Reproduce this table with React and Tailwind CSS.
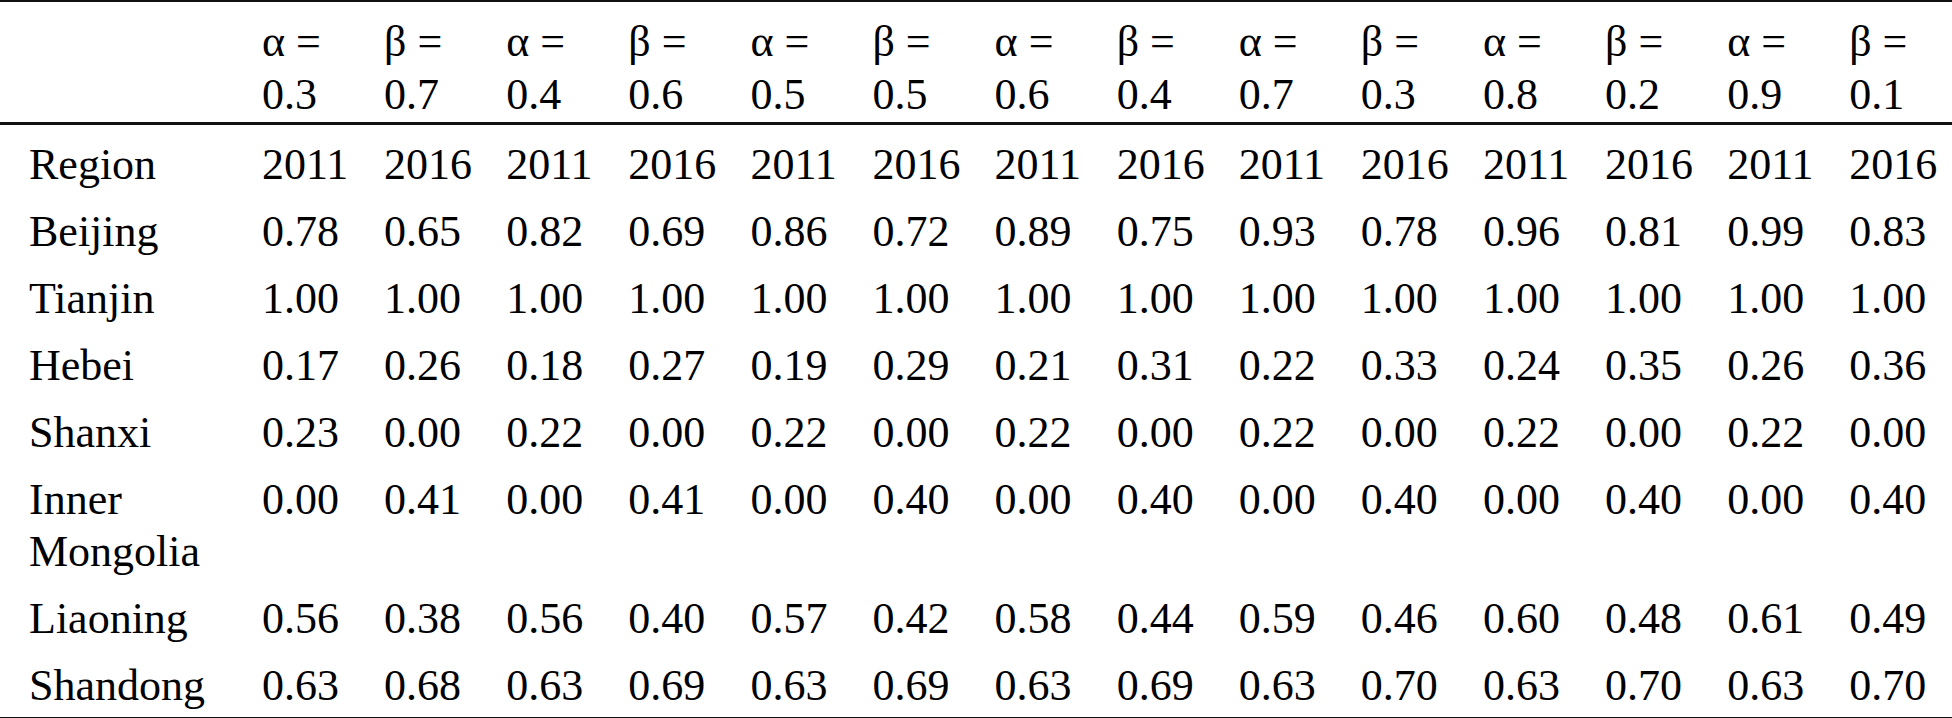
import React from "react";

const params = [
  ["α", "0.3"], ["β", "0.7"], ["α", "0.4"], ["β", "0.6"], ["α", "0.5"], ["β", "0.5"], ["α", "0.6"],
  ["β", "0.4"], ["α", "0.7"], ["β", "0.3"], ["α", "0.8"], ["β", "0.2"], ["α", "0.9"], ["β", "0.1"],
];

const rows = [
  ["Beijing", "0.78 0.65 0.82 0.69 0.86 0.72 0.89 0.75 0.93 0.78 0.96 0.81 0.99 0.83"],
  ["Tianjin", "1.00 1.00 1.00 1.00 1.00 1.00 1.00 1.00 1.00 1.00 1.00 1.00 1.00 1.00"],
  ["Hebei", "0.17 0.26 0.18 0.27 0.19 0.29 0.21 0.31 0.22 0.33 0.24 0.35 0.26 0.36"],
  ["Shanxi", "0.23 0.00 0.22 0.00 0.22 0.00 0.22 0.00 0.22 0.00 0.22 0.00 0.22 0.00"],
  ["Inner Mongolia", "0.00 0.41 0.00 0.41 0.00 0.40 0.00 0.40 0.00 0.40 0.00 0.40 0.00 0.40"],
  ["Liaoning", "0.56 0.38 0.56 0.40 0.57 0.42 0.58 0.44 0.59 0.46 0.60 0.48 0.61 0.49"],
  ["Shandong", "0.63 0.68 0.63 0.69 0.63 0.69 0.63 0.69 0.63 0.70 0.63 0.70 0.63 0.70"],
];

const years = ["2011", "2016", "2011", "2016", "2011", "2016", "2011", "2016", "2011", "2016", "2011", "2016", "2011", "2016"];

export default function App() {
  return (
    <div className="w-[1952px] h-[718px] bg-white text-black [font-family:'Liberation_Serif','Times_New_Roman',serif] text-[44px] leading-[52px]">
      <table className="w-[1952px] table-fixed border-collapse">
        <colgroup>
          <col className="w-[252px]" />
          {params.map((_, i) => (
            <col key={i} className={i === 13 ? "w-[112.7px]" : "w-[122.1px]"} />
          ))}
        </colgroup>
        <thead>
          <tr className="border-t-2 border-b-[3px] border-[#111]">
            <th className="pt-[13px] pb-[1px]" />
            {params.map(([g, v], i) => (
              <th key={i} className="pl-[10px] pt-[13px] pb-[1px] text-left font-normal leading-[53px] align-top">
                <div>{g} =</div>
                <div>{v}</div>
              </th>
            ))}
          </tr>
        </thead>
        <tbody className="border-b-2 border-[#111]">
          <tr>
            <td className="pl-[29px] pt-[14px] pb-[7.5px] align-top">Region</td>
            {years.map((y, i) => (
              <td key={i} className="pl-[10px] pt-[14px] pb-[7.5px] align-top">{y}</td>
            ))}
          </tr>
          {rows.map(([name, vals], r) => (
            <tr key={r}>
              <td className={`pl-[29px] pr-[10px] pt-[7.5px] align-top ${r === rows.length - 1 ? "pb-[5px]" : "pb-[7.5px]"}`}>{name}</td>
              {vals.split(" ").map((v, i) => (
                <td key={i} className={`pl-[10px] pt-[7.5px] align-top ${r === rows.length - 1 ? "pb-[5px]" : "pb-[7.5px]"}`}>{v}</td>
              ))}
            </tr>
          ))}
        </tbody>
      </table>
    </div>
  );
}
